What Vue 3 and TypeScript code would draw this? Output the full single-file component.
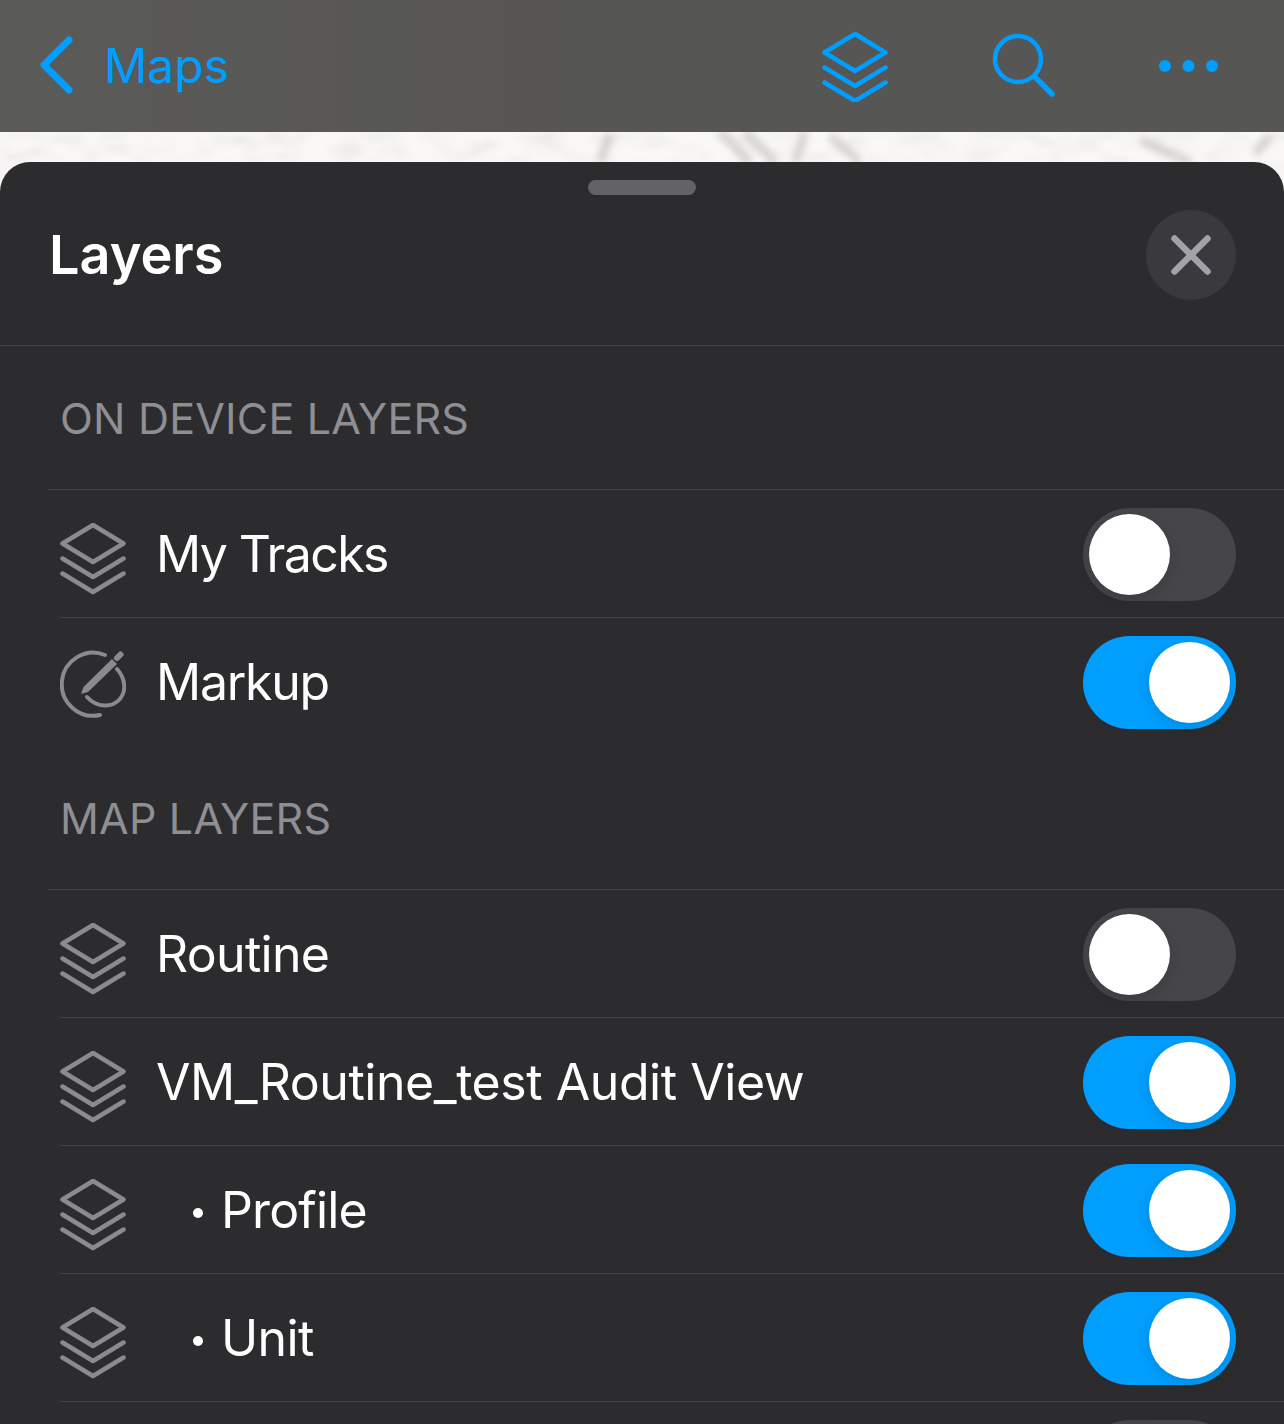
<script setup lang="ts">
interface Row {
  label: string
  on: boolean
  tracking: number
  icon?: 'layers' | 'markup'
  sub?: boolean
}

const deviceRows: Row[] = [
  { label: 'My Tracks', on: false, tracking: -1.6 },
  { label: 'Markup', on: true, icon: 'markup', tracking: -1.25 },
]
const mapRows: Row[] = [
  { label: 'Routine', on: false, tracking: -0.7 },
  { label: 'VM_Routine_test Audit View', on: true, tracking: -0.45 },
  { label: 'Profile', on: true, sub: true, tracking: -0.85 },
  { label: 'Unit', on: true, sub: true, tracking: -0.6 },
  { label: '', on: false, tracking: 0 },
]
const sections = [
  { title: 'ON DEVICE LAYERS', rows: deviceRows },
  { title: 'MAP LAYERS', rows: mapRows },
]
</script>

<template>
  <div class="page">
    <header class="nav">
      <div class="back">
        <svg class="chev" viewBox="0 0 38 60" fill="none">
          <path d="M31 4 L6 29 L31 54" />
        </svg>
        <span class="back-label">Maps</span>
      </div>
      <div class="actions">
        <svg class="nav-layers" viewBox="0 -2.5 66 72" fill="none">
          <path d="M33 1.500 L63.500 20 L33 38.500 L2.500 20 Z" />
          <path d="M2.500 35 L33 53.500 L63.500 35" />
          <path d="M2.500 50 L33 68.500 L63.500 50" />
        </svg>
        <svg class="nav-search" viewBox="0 0 66 72" fill="none">
          <circle cx="28" cy="29" r="23" />
          <path d="M45 47 L62 64" />
        </svg>
        <svg class="nav-dots" viewBox="0 0 60 72">
          <circle cx="7" cy="36" r="6" />
          <circle cx="30.500" cy="36" r="6" />
          <circle cx="54" cy="36" r="6" />
        </svg>
      </div>
    </header>

    <div class="map-strip">
      <svg class="terrain" width="1284" height="30" viewBox="0 0 1284 30">
        <defs>
          <filter id="relief" x="0" y="0" width="100%" height="100%">
            <feTurbulence type="fractalNoise" baseFrequency="0.03 0.07" numOctaves="2" seed="7" />
            <feColorMatrix type="matrix" values="0 0 0 0 0.78  0 0 0 0 0.77  0 0 0 0 0.75  1.5 0 0 0 -0.62" />
            <feGaussianBlur stdDeviation="2.5" />
          </filter>
        </defs>
        <rect width="1284" height="30" filter="url(#relief)" />
        <g class="ridges">
          <path d="M720 0 L750 30 M745 0 L775 30 M805 0 L795 30 M830 4 L860 30" />
          <path d="M1140 8 L1190 30 M610 2 L600 30 M1270 4 L1255 22" />
        </g>
      </svg>
    </div>

    <main class="sheet">
      <div class="handle-wrap"><div class="handle"></div></div>
      <div class="sheet-head">
        <h1 class="title">Layers</h1>
        <button class="close" type="button" aria-label="Close">
          <svg viewBox="0 0 40 40" fill="none"><path d="M3.500 3.500 L36.500 36.500 M36.500 3.500 L3.500 36.500" /></svg>
        </button>
      </div>

      <section v-for="s in sections" :key="s.title">
        <div class="section-title"><span>{{ s.title }}</span></div>
        <div v-for="(r, i) in s.rows" :key="i" class="row" :class="{ last: s.title === 'ON DEVICE LAYERS' && i === s.rows.length - 1 }">
          <svg v-if="r.icon === 'markup'" class="row-icon markup" viewBox="0 0 66 68" fill="none">
            <path class="line" d="M45 5 A31.500 31.500 0 1 0 40 65" />
            <path class="line" d="M57 19 C65 28 67 40 60 49 C52 58 37 58 27 47" />
            <path class="fill" d="M21 44 L23.500 37 L52 9 L57 14 L28 42 Z" />
            <path class="cap" d="M57 8 L60.500 4.500" />
          </svg>
          <svg v-else class="row-icon layers" viewBox="0 -0.500 66 72" fill="none">
            <path d="M33 1.500 L63.500 20 L33 38.500 L2.500 20 Z" />
            <path d="M2.500 35 L33 53.500 L63.500 35" />
            <path d="M2.500 50 L33 68.500 L63.500 50" />
          </svg>
          <div class="label" :class="{ sub: r.sub }" :style="{ letterSpacing: r.tracking + 'px' }">
            <span v-if="r.sub" class="bullet"></span>
            <span>{{ r.label }}</span>
          </div>
          <div class="toggle" :class="{ on: r.on }"><div class="knob"></div></div>
        </div>
      </section>
    </main>
  </div>
</template>

<style>
html, body { margin: 0; background: #2c2c2e; }
</style>

<style scoped>
.page {
  width: 1284px;
  height: 1424px;
  overflow: hidden;
  display: flex;
  flex-direction: column;
  font-family: Inter, "Liberation Sans", sans-serif;
  background: #f6f5f4;
}
.nav {
  height: 132px;
  flex: none;
  display: flex;
  align-items: center;
  justify-content: space-between;
  background: linear-gradient(90deg, #5a5a59 0%, #575655 40%, #565655 100%);
}
.back {
  display: flex;
  align-items: center;
  padding-left: 38px;
}
.chev {
  width: 38px;
  height: 60px;
}
.chev path {
  stroke: #009fff;
  stroke-width: 7;
  stroke-linecap: round;
  stroke-linejoin: round;
}
.back-label {
  margin: 0 0 2px 28px;
  font-size: 48px;
  color: #009fff;
}
.actions {
  display: flex;
  align-items: center;
  gap: 102px;
  padding-right: 66px;
}
.actions svg { height: 72px; }
.nav-layers { width: 66px; }
.nav-search { width: 66px; }
.nav-dots { width: 60px; }
.nav-layers path, .nav-search circle, .nav-search path {
  stroke: #009fff;
  stroke-width: 4.5;
  stroke-linecap: round;
  stroke-linejoin: round;
}
.nav-search path { stroke-width: 5.5; }
.nav-dots circle { fill: #009fff; }
.map-strip {
  height: 30px;
  flex: none;
  background: #f9f8f7;
  overflow: hidden;
}
.terrain {
  display: block;
}
.ridges {
  filter: blur(3px);
}
.ridges path {
  fill: none;
  stroke: #c4c1bc;
  stroke-width: 9;
  opacity: .6;
}
.sheet {
  flex: 1;
  min-height: 0;
  overflow: hidden;
  background: #2c2c2e;
  border-radius: 30px 30px 0 0;
}
.handle-wrap {
  height: 48px;
  padding-top: 18px;
  box-sizing: border-box;
  display: flex;
  justify-content: center;
}
.handle {
  width: 108px;
  height: 15px;
  border-radius: 8px;
  background: #636366;
}
.sheet-head {
  height: 136px;
  box-sizing: border-box;
  border-bottom: 1px solid #414144;
  display: flex;
  align-items: flex-start;
  justify-content: space-between;
  padding: 0 48px 0 49px;
}
.title {
  margin: 12px 0 0;
  font-size: 54px;
  line-height: 66px;
  font-weight: 600;
  color: #fff;
}
.close {
  width: 90px;
  height: 90px;
  padding: 0;
  border: 0;
  border-radius: 50%;
  background: #3a3a3e;
  display: flex;
  align-items: center;
  justify-content: center;
}
.close svg { width: 40px; height: 40px; }
.close path {
  stroke: #a2a2a8;
  stroke-width: 6.500;
  stroke-linecap: round;
}
.section-title {
  height: 144px;
  box-sizing: border-box;
  margin-left: 48px;
  padding-left: 12px;
  border-bottom: 1px solid #414144;
  display: flex;
  align-items: center;
  font-size: 43px;
  letter-spacing: 0.2px;
  color: #8e8e93;
}
.row {
  height: 128px;
  box-sizing: border-box;
  margin-left: 60px;
  padding: 2px 48px 0 0;
  border-bottom: 1px solid #414144;
  display: flex;
  align-items: center;
}
.row.last { border-bottom-color: transparent; }
.row-icon {
  flex: none;
  width: 66px;
  height: 72px;
  margin-top: 8px;
}
.row-icon.layers path {
  stroke: #8a8a8f;
  stroke-width: 4.500;
  stroke-linecap: round;
  stroke-linejoin: round;
}
.row-icon.markup { height: 68px; margin-top: 2px; }
.markup .line {
  stroke: #8a8a8f;
  stroke-width: 4;
  stroke-linecap: round;
}
.markup .fill { fill: #8a8a8f; }
.markup .cap {
  stroke: #8a8a8f;
  stroke-width: 6;
  stroke-linecap: round;
}
.label {
  flex: 1;
  margin: 0 0 2px 30px;
  display: flex;
  align-items: center;
  font-size: 50px;
  color: #fff;
}
.label.sub { padding-left: 37px; }
.bullet {
  width: 10px;
  height: 10px;
  border-radius: 50%;
  background: #fff;
  margin: 6px 18px 0 0;
}
.toggle {
  flex: none;
  width: 153px;
  height: 93px;
  box-sizing: border-box;
  padding: 6px;
  border-radius: 47px;
  background: #46454a;
  display: flex;
  justify-content: flex-start;
}
.toggle.on {
  background: #009fff;
  justify-content: flex-end;
}
.knob {
  width: 81px;
  height: 81px;
  border-radius: 50%;
  background: #fff;
  box-shadow: 0 4px 14px rgba(0, 0, 0, .14);
}
</style>
